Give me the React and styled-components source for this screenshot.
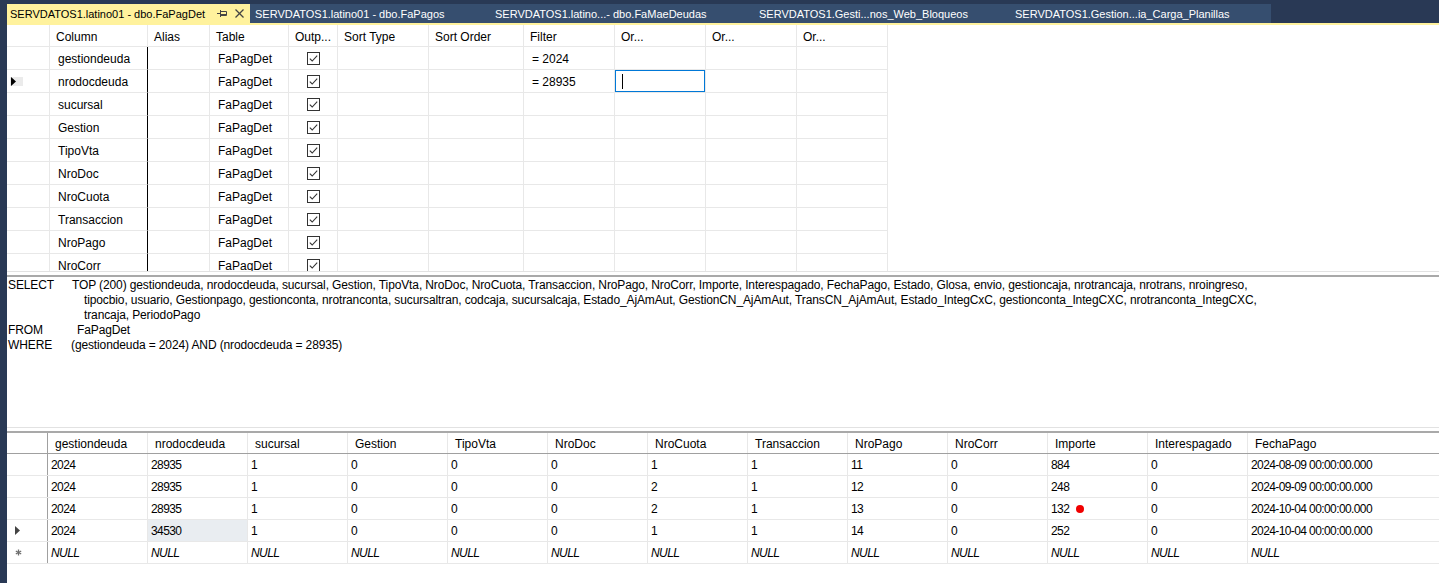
import React from "react";
import styled, { createGlobalStyle } from "styled-components";

const GlobalStyle = createGlobalStyle`
  html, body {
    margin: 0;
    padding: 0;
    background: #ffffff;
  }
  body {
    font-family: "Liberation Sans", Arial, sans-serif;
    font-size: 12px;
    color: #000;
    overflow: hidden;
  }
`;

const Frame = styled.div`
  width: 1439px;
  height: 583px;
  display: flex;
  flex-direction: column;
  background: #293955;
  overflow: hidden;
`;

const TabWell = styled.div`
  height: 23px;
  flex-shrink: 0;
  display: flex;
  align-items: flex-end;
  padding-left: 7px;
`;

const Tab = styled.div`
  box-sizing: border-box;
  width: ${(p) => p.$w}px;
  height: 19px;
  display: flex;
  align-items: center;
  padding-left: ${(p) => (p.$active ? 3 : 5)}px;
  background: ${(p) => (p.$active ? "#fff29d" : "#364e6f")};
  color: ${(p) => (p.$active ? "#000" : "#ffffff")};
  white-space: nowrap;
  font-size: 11px;
`;

const TabTitle = styled.span`
  flex: 1;
  overflow: hidden;
`;

const TabIcon = styled.svg`
  margin-right: ${(p) => p.$mr || 0}px;
  flex-shrink: 0;
`;

const Body = styled.div`
  flex: 1;
  display: flex;
  min-height: 0;
`;

const LeftStrip = styled.div`
  width: 7px;
  flex-shrink: 0;
  background: #293955;
`;

const Main = styled.div`
  flex: 1;
  display: flex;
  flex-direction: column;
  background: #ffffff;
  min-width: 0;
`;

const YellowRule = styled.div`
  height: 2px;
  background: #fff29d;
  flex-shrink: 0;
`;

/* ---------- criteria pane ---------- */

const criteriaCols = "43px 98px 62px 79px 49px 91px 95px 91px 91px 91px 91px";

const CriteriaPane = styled.div`
  height: 246px;
  flex-shrink: 0;
  overflow: hidden;
  border-bottom: 1px solid #e2e2e2;
`;

const CritRow = styled.div`
  display: grid;
  grid-template-columns: ${criteriaCols};
  height: ${(p) => (p.$head ? 22 : 23)}px;
`;

const CritCell = styled.div`
  box-sizing: border-box;
  display: flex;
  align-items: center;
  justify-content: ${(p) => (p.$center ? "center" : "flex-start")};
  padding-left: ${(p) => (p.$center || p.$bare ? 0 : p.$head ? 6 : 8)}px;
  padding-top: ${(p) => (p.$center || p.$bare ? 0 : 2)}px;
  border-right: 1px solid ${(p) => (p.$dark ? "#000" : "#e8e8e8")};
  border-bottom: 1px solid #e8e8e8;
  white-space: nowrap;
  overflow: hidden;
  position: relative;
`;

const FocusBox = styled.div`
  position: absolute;
  inset: 0;
  border: 1.5px solid #0078d7;
`;

const Caret = styled.div`
  width: 1px;
  height: 15px;
  margin-top: -2px;
  background: #000;
  margin-left: -1px;
`;

const IndicatorPad = styled.div`
  width: 12px;
  height: 9px;
  margin-left: 3px;
  background: #ebebeb;
  display: flex;
  align-items: center;
  padding-left: 1px;
`;

const Check = () => (
  <svg width="13" height="13" viewBox="0 0 13 13">
    <rect x="0.5" y="0.5" width="12" height="12" fill="#fff" stroke="#333" />
    <path d="M2.8 6.6 L5.2 9 L10.2 3.6" fill="none" stroke="#333" strokeWidth="1.1" />
  </svg>
);

const Arrow = ({ color = "#000" }) => (
  <svg width="5" height="9" viewBox="0 0 5 9">
    <path d="M0 0 L5 4.5 L0 9 Z" fill={color} />
  </svg>
);

/* ---------- splitters ---------- */

const Splitter = styled.div`
  height: ${(p) => p.$gap}px;
  flex-shrink: 0;
  border-bottom: 2px solid #a9a9a9;
`;

/* ---------- sql pane ---------- */

const SqlPane = styled.div`
  height: 151px;
  flex-shrink: 0;
  padding: 1px 0 0 1px;
  box-sizing: border-box;
  border-bottom: 1px solid #e2e2e2;
  font-family: "Liberation Sans Narrow", "Liberation Sans", Arial, sans-serif;
  font-size: 12px;
  letter-spacing: -0.12px;
  line-height: 15px;
  overflow: hidden;
`;

const SqlLine = styled.div`
  display: flex;
  white-space: nowrap;
  padding-left: ${(p) => p.$indent || 0}px;
`;

const Keyword = styled.span`
  width: ${(p) => p.$w}px;
  flex-shrink: 0;
`;

/* ---------- results grid ---------- */

const resultCols = "41px repeat(12, 100px) 1fr";

const ResultsPane = styled.div`
  flex: 1;
  font-family: "Liberation Sans Narrow", "Liberation Sans", Arial, sans-serif;
  font-size: 12px;
`;

const ResRow = styled.div`
  display: grid;
  grid-template-columns: ${resultCols};
  height: ${(p) => (p.$head ? 21 : 22)}px;
  border-bottom: 1px solid ${(p) => (p.$head ? "#a0a0a0" : "#e8e8e8")};
  box-sizing: border-box;
`;

const ResCell = styled.div`
  box-sizing: border-box;
  display: flex;
  align-items: center;
  padding-left: ${(p) => (p.$head ? 7 : 3)}px;
  padding-top: ${(p) => (p.$rowHead ? 0 : 1)}px;
  letter-spacing: ${(p) => (p.$head ? 0 : -0.6)}px;
  border-right: 1px solid ${(p) => (p.$rowHead ? "#a0a0a0" : "#e8e8e8")};
  background: ${(p) => (p.$selected ? "#e9edf1" : "transparent")};
  font-style: ${(p) => (p.$null ? "italic" : "normal")};
  white-space: nowrap;
  overflow: hidden;
  &:last-child {
    border-right: none;
  }
`;

const RowMark = styled.div`
  padding-left: 5px;
  display: flex;
  align-items: center;
`;

const RedDot = styled.span`
  display: inline-block;
  width: 8px;
  height: 8px;
  border-radius: 50%;
  background: #f00000;
  margin-left: 7px;
`;

const Star = () => (
  <svg width="7" height="7" viewBox="0 0 7 7">
    <g stroke="#6d6d6d" strokeWidth="1.3">
      <line x1="3.5" y1="0.5" x2="3.5" y2="6.5" />
      <line x1="0.8" y1="2" x2="6.2" y2="5" />
      <line x1="0.8" y1="5" x2="6.2" y2="2" />
    </g>
  </svg>
);

const tabs = [
  { title: "SERVDATOS1.latino01 - dbo.FaPagDet", w: 243, active: true },
  { title: "SERVDATOS1.latino01 - dbo.FaPagos", w: 240 },
  { title: "SERVDATOS1.latino...- dbo.FaMaeDeudas", w: 264 },
  { title: "SERVDATOS1.Gesti...nos_Web_Bloqueos", w: 256 },
  { title: "SERVDATOS1.Gestion...ia_Carga_Planillas", w: 261 },
];

const critHeaders = ["", "Column", "Alias", "Table", "Outp...", "Sort Type", "Sort Order", "Filter", "Or...", "Or...", "Or..."];

const critRows = [
  { col: "gestiondeuda", filter: "= 2024" },
  { col: "nrodocdeuda", filter: "= 28935", current: true },
  { col: "sucursal" },
  { col: "Gestion" },
  { col: "TipoVta" },
  { col: "NroDoc" },
  { col: "NroCuota" },
  { col: "Transaccion" },
  { col: "NroPago" },
  { col: "NroCorr" },
];

const sqlSelect = [
  "TOP (200) gestiondeuda, nrodocdeuda, sucursal, Gestion, TipoVta, NroDoc, NroCuota, Transaccion, NroPago, NroCorr, Importe, Interespagado, FechaPago, Estado, Glosa, envio, gestioncaja, nrotrancaja, nrotrans, nroingreso,",
  "tipocbio, usuario, Gestionpago, gestionconta, nrotranconta, sucursaltran, codcaja, sucursalcaja, Estado_AjAmAut, GestionCN_AjAmAut, TransCN_AjAmAut, Estado_IntegCxC, gestionconta_IntegCXC, nrotranconta_IntegCXC,",
  "trancaja, PeriodoPago",
];

const resHeaders = ["gestiondeuda", "nrodocdeuda", "sucursal", "Gestion", "TipoVta", "NroDoc", "NroCuota", "Transaccion", "NroPago", "NroCorr", "Importe", "Interespagado", "FechaPago"];

const resRows = [
  ["2024", "28935", "1", "0", "0", "0", "1", "1", "11", "0", "884", "0", "2024-08-09 00:00:00.000"],
  ["2024", "28935", "1", "0", "0", "0", "2", "1", "12", "0", "248", "0", "2024-09-09 00:00:00.000"],
  ["2024", "28935", "1", "0", "0", "0", "2", "1", "13", "0", "132", "0", "2024-10-04 00:00:00.000"],
  ["2024", "34530", "1", "0", "0", "0", "1", "1", "14", "0", "252", "0", "2024-10-04 00:00:00.000"],
];

const App = () => (
  <>
    <GlobalStyle />
    <Frame>
      <TabWell>
        {tabs.map((t) => (
          <Tab key={t.title} $w={t.w} $active={t.active}>
            <TabTitle>{t.title}</TabTitle>
            {t.active && (
              <>
                <TabIcon $mr={8} width="10" height="9" viewBox="0 0 10 9">
                  <g fill="none" stroke="#444" strokeWidth="1">
                    <line x1="0" y1="4.5" x2="3" y2="4.5" />
                    <line x1="3.5" y1="1" x2="3.5" y2="8" />
                    <path d="M3.5 2.5 H9.5 V6.5 H3.5" />
                    <line x1="4" y1="5.5" x2="9" y2="5.5" />
                  </g>
                </TabIcon>
                <TabIcon $mr={6} width="9" height="9" viewBox="0 0 9 9">
                  <g stroke="#444" strokeWidth="1.2">
                    <line x1="0.5" y1="0.5" x2="8.5" y2="8.5" />
                    <line x1="8.5" y1="0.5" x2="0.5" y2="8.5" />
                  </g>
                </TabIcon>
              </>
            )}
          </Tab>
        ))}
      </TabWell>
      <Body>
        <LeftStrip />
        <Main>
          <YellowRule />
          <CriteriaPane>
            <CritRow $head>
              {critHeaders.map((h, i) => (
                <CritCell key={i} $head>{h}</CritCell>
              ))}
            </CritRow>
            {critRows.map((r) => (
              <CritRow key={r.col}>
                <CritCell $bare>
                  {r.current && (
                    <IndicatorPad>
                      <Arrow />
                    </IndicatorPad>
                  )}
                </CritCell>
                <CritCell $dark>{r.col}</CritCell>
                <CritCell />
                <CritCell>FaPagDet</CritCell>
                <CritCell $center>
                  <Check />
                </CritCell>
                <CritCell />
                <CritCell />
                <CritCell>{r.filter}</CritCell>
                <CritCell>
                  {r.current && (
                    <>
                      <FocusBox />
                      <Caret />
                    </>
                  )}
                </CritCell>
                <CritCell />
                <CritCell />
              </CritRow>
            ))}
          </CriteriaPane>
          <Splitter $gap={3} />
          <SqlPane>
            <SqlLine>
              <Keyword $w={64}>SELECT</Keyword>
              {sqlSelect[0]}
            </SqlLine>
            <SqlLine $indent={76}>{sqlSelect[1]}</SqlLine>
            <SqlLine $indent={76}>{sqlSelect[2]}</SqlLine>
            <SqlLine>
              <Keyword $w={69}>FROM</Keyword>
              FaPagDet
            </SqlLine>
            <SqlLine>
              <Keyword $w={63}>WHERE</Keyword>
              (gestiondeuda = 2024) AND (nrodocdeuda = 28935)
            </SqlLine>
          </SqlPane>
          <Splitter $gap={3} />
          <ResultsPane>
            <ResRow $head>
              <ResCell $rowHead $head />
              {resHeaders.map((h) => (
                <ResCell key={h} $head>{h}</ResCell>
              ))}
            </ResRow>
            {resRows.map((r, ri) => (
              <ResRow key={ri}>
                <ResCell $rowHead>
                  {ri === 3 && (
                    <RowMark>
                      <Arrow color="#444" />
                    </RowMark>
                  )}
                </ResCell>
                {r.map((v, ci) => (
                  <ResCell key={ci} $selected={ri === 3 && ci === 1}>
                    {v}
                    {ri === 2 && ci === 10 && <RedDot />}
                  </ResCell>
                ))}
              </ResRow>
            ))}
            <ResRow>
              <ResCell $rowHead>
                <RowMark>
                  <Star />
                </RowMark>
              </ResCell>
              {resHeaders.map((h) => (
                <ResCell key={h} $null>NULL</ResCell>
              ))}
            </ResRow>
          </ResultsPane>
        </Main>
      </Body>
    </Frame>
  </>
);

export default App;
